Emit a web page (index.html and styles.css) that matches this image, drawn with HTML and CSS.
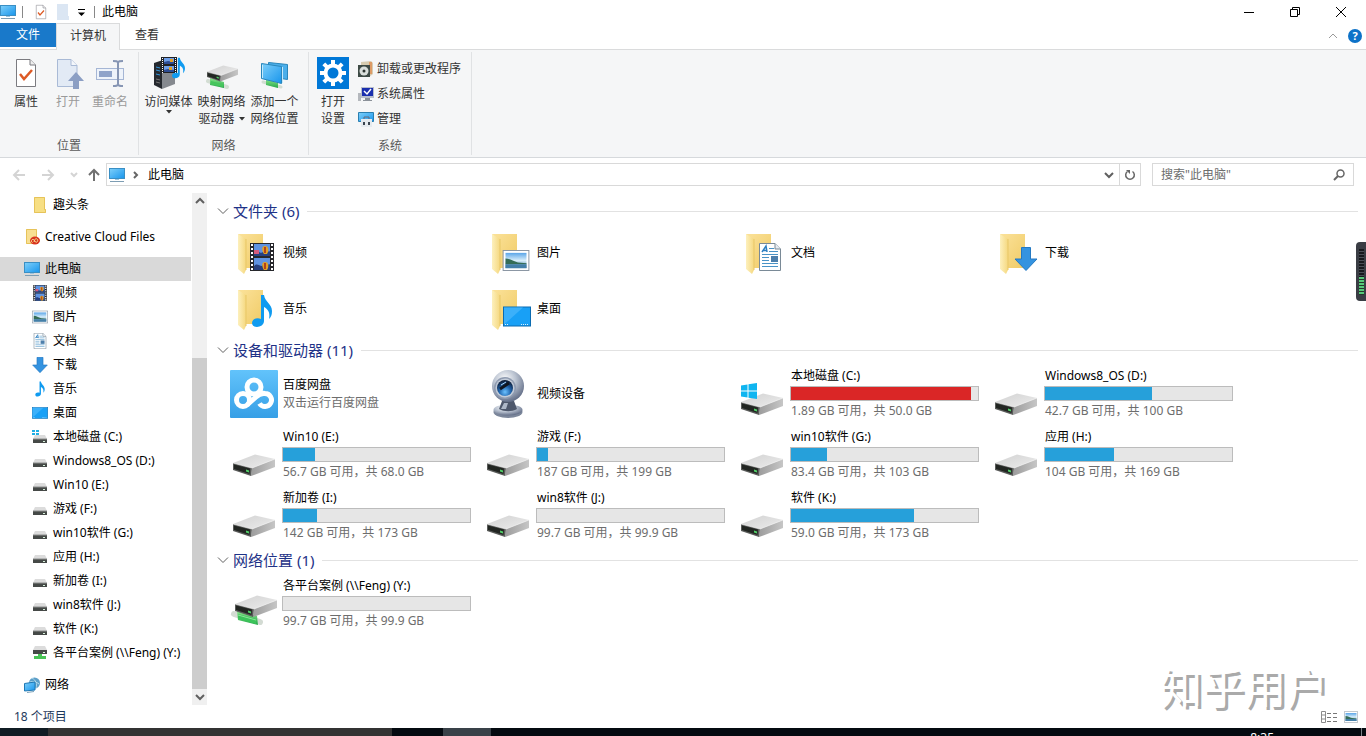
FILE: index.html
```
<!DOCTYPE html>
<html lang="zh-CN">
<head>
	<meta charset="utf-8">
	<title>此电脑</title>
	<link rel="stylesheet" href="styles.css">
</head>
<body>
	<svg class="sprite" aria-hidden="true">
		<defs>
			<linearGradient id="g-screen" x1="0" y1="0" x2="1" y2="1">
				<stop offset="0" stop-color="#7fd0fa"/><stop offset="1" stop-color="#1795ec"/>
			</linearGradient>
			<linearGradient id="g-folder" x1="0" y1="0" x2="1" y2="1">
				<stop offset="0" stop-color="#fbe29a"/><stop offset="1" stop-color="#f0cb66"/>
			</linearGradient>
			<linearGradient id="g-flap" x1="0" y1="0" x2="1" y2="0">
				<stop offset="0" stop-color="#fdf0bd"/><stop offset="1" stop-color="#f5d87f"/>
			</linearGradient>
			<linearGradient id="g-top" x1="0" y1="0" x2="1" y2="1">
				<stop offset="0" stop-color="#d2d2d2"/><stop offset="1" stop-color="#ececec"/>
			</linearGradient>
			<linearGradient id="g-side" x1="0" y1="0" x2="1" y2="0">
				<stop offset="0" stop-color="#9c9c9c"/><stop offset="1" stop-color="#c6c6c6"/>
			</linearGradient>
			<linearGradient id="g-pipe" x1="0" y1="0" x2="0" y2="1">
				<stop offset="0" stop-color="#8be58b"/><stop offset="1" stop-color="#25a84a"/>
			</linearGradient>
			<linearGradient id="g-baidu" x1="0" y1="0" x2="0" y2="1">
				<stop offset="0" stop-color="#62c3fb"/><stop offset="1" stop-color="#369fe6"/>
			</linearGradient>
			<linearGradient id="g-photo" x1="0" y1="0" x2="0" y2="1">
				<stop offset="0" stop-color="#5aa5e8"/><stop offset="0.5" stop-color="#d8eefa"/><stop offset="1" stop-color="#3d7da5"/>
			</linearGradient>
			<radialGradient id="g-cam" cx="0.4" cy="0.3" r="0.7">
				<stop offset="0" stop-color="#ffffff"/><stop offset="0.5" stop-color="#b9c2d0"/><stop offset="1" stop-color="#66718a"/>
			</radialGradient>
			<radialGradient id="g-lens" cx="0.5" cy="0.75" r="0.7">
				<stop offset="0" stop-color="#6cc2ff"/><stop offset="0.5" stop-color="#2267b0"/><stop offset="1" stop-color="#0c1c38"/>
			</radialGradient>
		</defs>

		<symbol id="pc" viewBox="0 0 16 16">
			<rect x="0.5" y="1.5" width="15" height="10" fill="url(#g-screen)" stroke="#3a8fc4"/>
			<path d="M6 12h4v1H6z" fill="#9cc3dd"/><path d="M1 14h14v1H1z" fill="#7d9db3"/>
		</symbol>
		<symbol id="check-doc" viewBox="0 0 24 32">
			<path d="M2.500 2.500H16l5.500 5.500V29.500H2.500z" fill="#fff" stroke="#7b7b80"/>
			<path d="M16 2.500V8h5.500" fill="#eee" stroke="#7b7b80"/>
			<path d="M6 17l4 5 8-9" fill="none" stroke="#dd5a25" stroke-width="2.500"/>
		</symbol>
		<symbol id="open-doc" viewBox="0 0 32 32">
			<path d="M5.500 2.500H19l6 6V29.500H5.500z" fill="#e2eaf5" stroke="#a9bad6"/>
			<path d="M19 2.500V8.500h6" fill="#f4f7fb" stroke="#a9bad6"/>
			<path d="M24 15l8 9h-5v8h-6v-8h-5z" fill="#8c9fc4"/>
		</symbol>
		<symbol id="rename" viewBox="0 0 32 32">
			<rect x="2.500" y="11.500" width="27" height="11" fill="#eef3fa" stroke="#a5b6d5"/>
			<path d="M5 14h13v6H5z" fill="#8fa3c9"/>
			<path d="M19 4c3 0 5 0 5 2v21c0 2-2 2-5 2M29 4c-3 0-5 0-5 2M29 29c-3 0-5 0-5-2" fill="none" stroke="#8796b4" stroke-width="2"/>
		</symbol>
		<symbol id="film" viewBox="0 0 24 28">
			<path d="M0 0h24v28H0z" fill="#27282c"/>
			<path d="M4 1h16v12H4zM4 15h16v12H4z" fill="#5f93e2"/>
			<path d="M4 10c4-5 6 2 9-1s5 1 7-1v5H4zM4 23c4-4 6 2 9-1s5 1 7-1v6H4z" fill="#27407f"/>
			<path d="M15 3c4 0 4 5 2 8h-3c-2-3-3-8 1-8zM15 19c4 0 4 5 2 8h-3c-2-3-3-8 1-8z" fill="#e2a126"/>
			<path d="M15 4v6M15 20v6" stroke="#a3251b" stroke-width="1.500"/>
			<path d="M4 7h5v4H4z" fill="#d65b7b"/>
			<path d="M2 1v27M22 1v27" stroke="#fff" stroke-width="2" stroke-dasharray="2 2"/>
		</symbol>
		<symbol id="picture" viewBox="0 0 28 22">
			<rect x="0.5" y="0.5" width="27" height="21" fill="#fff" stroke="#8793a0"/>
			<path d="M3 3h22v16H3z" fill="url(#g-photo)"/>
			<path d="M3 9c5 0 8 3 13 4l9 1v1H3z" fill="#356d57"/><path d="M3 15h22v4H3z" fill="#447fa8"/>
		</symbol>
		<symbol id="text-doc" viewBox="0 0 22 28">
			<path d="M.5.5H16l5.500 5.500v21.500H.5z" fill="#fff" stroke="#7a8a97"/>
			<path d="M16 .5V6h5.500" fill="#e8edf2" stroke="#7a8a97"/>
			<path d="M3 9l4-6 1 6M4 7.500h4" fill="none" stroke="#2d7fc1" stroke-width="1.500"/>
			<path d="M10 5.500h5M10 8.500h9M3 11.500h16M3 14.500h7M3 17.500h7M3 20.500h16M3 23.500h16" stroke="#4a93c6"/>
			<path d="M12 13h7v6h-7z" fill="#4d7fab"/>
		</symbol>
		<symbol id="down" viewBox="0 0 24 24">
			<path d="M7.500.5h9V12H23L12 23.500 1 12h6.500z" fill="#3493e0" stroke="#2479c2"/>
		</symbol>
		<symbol id="note" viewBox="0 0 22 34">
			<path d="M10 1h3c1 7 8 9 8 16 0 4-1 6-3 8 1-6 0-9-5-12v14c0 7-12 8-12 2 0-4 5-6 9-4z" fill="#109bf0"/>
		</symbol>
		<symbol id="desktop" viewBox="0 0 28 20">
			<rect x=".5" y=".5" width="27" height="19" fill="#18a0f6" stroke="#0b6bb0"/>
			<path d="M1 18L20 1H1z" fill="#3bb0fa"/>
			<path d="M2 18h4M18 18h8" stroke="#d9f1ff" stroke-dasharray="1 1"/>
		</symbol>
		<symbol id="folder" viewBox="0 0 48 48">
			<path d="M8 5h25v34H14z" fill="url(#g-folder)"/>
			<path d="M8 5l8 5v31l-2 4-6-5z" fill="url(#g-flap)"/>
			<path d="M16 10v31" stroke="#e8c766"/>
		</symbol>
		<symbol id="folder-small" viewBox="0 0 16 16">
			<path d="M2 0h11v12h1v4H2z" fill="#f7df84"/><path d="M2.500.5h10v12h1v3h-11z" fill="none" stroke="#e6c35a"/>
		</symbol>
		<symbol id="cloud-folder" viewBox="0 0 16 16">
			<path d="M2 0h11v15H2z" fill="#f8df92"/><path d="M2.500.5h10v14h-10z" fill="none" stroke="#e6c35a"/>
			<ellipse cx="11" cy="11.500" rx="5" ry="4" fill="#d9331e"/>
			<path d="M8.500 13.500a1.500 1.500 0 1 1 1-3l2 2.500c2 1 3-2 1.500-3s-2 0-3 3" fill="none" stroke="#f8df92"/>
		</symbol>
		<symbol id="box" viewBox="0 0 42 24">
			<path d="M0 9L22 .5 42 5 19 14z" fill="url(#g-top)"/>
			<path d="M19 14L42 5v8L18 22z" fill="url(#g-side)"/>
			<path d="M0 9l19 5-1 8L0 16z" fill="#5a5c5a"/>
			<path d="M1 10.500l16 4-.5 5.500L1 15z" fill="#222622"/>
			<path d="M13 15.500l3 1v2l-3-1z" fill="#51d068"/>
			<path d="M0 9l19 5L42 5" fill="none" stroke="#f5f5f5" stroke-width=".6"/>
		</symbol>
		<symbol id="drive" viewBox="0 0 48 48">
			<use href="#box" x="3" y="23" width="42" height="24"/>
		</symbol>
		<symbol id="win-logo" viewBox="0 0 16 16">
			<path d="M0 2.500L6.500 1.500v6H0zM7.500 1.300L16 0v7.500H7.500zM0 8.500h6.500v6L0 13.500zM7.500 8.500H16V16L7.500 14.700z" fill="#0fb5f0"/>
		</symbol>
		<symbol id="drive-win" viewBox="0 0 48 48">
			<use href="#box" x="3" y="23" width="42" height="24"/>
			<use href="#win-logo" x="3" y="13" width="16" height="16"/>
		</symbol>
		<symbol id="drive-net" viewBox="0 0 48 48">
			<path d="M4 34l26 8" stroke="#d3dbd3" stroke-width="6" stroke-linecap="round"/>
			<path d="M7 31l20 5 1 9-20-5z" fill="url(#g-pipe)"/>
			<use href="#box" x="5" y="15" width="42" height="24"/>
			<path d="M8 34l18 5v5L8 39z" fill="#3cc35a"/><path d="M8 35l18 5" stroke="#8ee59a"/>
		</symbol>
		<symbol id="drive-small" viewBox="0 0 16 16">
			<path d="M3 6h10l2 4H1z" fill="#dcdcdc"/><path d="M1 10h14v4H1z" fill="#454947"/>
			<path d="M1 10h14" stroke="#8d8f8e"/><path d="M11 12h2v1h-2z" fill="#d8f2dc"/>
		</symbol>
		<symbol id="drive-small-win" viewBox="0 0 16 16">
			<use href="#drive-small" width="16" height="16"/>
			<path d="M0 1h3v2H0zM4 1h3v2H4zM0 4h3v2H0zM4 4h3v2H4z" fill="#20aee4"/>
		</symbol>
		<symbol id="drive-small-net" viewBox="0 0 16 16">
			<path d="M3 1h10l2 4H1z" fill="#dcdcdc"/><path d="M1 5h14v4H1z" fill="#454947"/>
			<path d="M11 7h2v1h-2z" fill="#d8f2dc"/>
			<path d="M6 9h4v2h4v3H2v-3h4z" fill="#48c455"/>
		</symbol>
		<symbol id="network" viewBox="0 0 16 16">
			<circle cx="10.500" cy="6" r="5.500" fill="#5c9fc8"/><path d="M8 1c4 2 5 6 4 10M6 5c3-1 7 0 9 2" stroke="#b5dced" fill="none"/>
			<path d="M.5 6.500L11 5v8L.5 14z" fill="url(#g-screen)" stroke="#1f78b4"/><path d="M3 15.500l7-1" stroke="#7ba1b8"/>
		</symbol>
		<symbol id="server" viewBox="0 0 32 32">
			<path d="M1 6l9-3v26H7l-6-3z" fill="#22262b"/><path d="M9 6l13-1v22l-13 5z" fill="#85898f"/>
			<path d="M1 6l8 1v25l-8-4z" fill="#25292f"/>
			<path d="M3 10l4 1M3 13l4 1M3 17l4 1" stroke="#3298e0"/>
			<path d="M3 22l4 1M3 25l4 1" stroke="#777"/>
			<use href="#film-wide" x="8" y="0" width="16" height="16"/>
			<use href="#note" x="18" y="0" width="15" height="22"/>
		</symbol>
		<symbol id="film-wide" viewBox="0 0 16 16">
			<path d="M0 0h16v16H0z" fill="#202226"/>
			<path d="M3 1h10v6H3zM3 9h10v6H3z" fill="#6f9fe8"/>
			<path d="M3 5l4-1 6 1v2H3zM3 13l4-1 6 1v2H3z" fill="#2d4c93"/>
			<path d="M9 2h3v3H9zM8 10h3v3H8z" fill="#e2a126"/>
			<path d="M1.500 1v15M14.500 1v15" stroke="#fff" stroke-dasharray="1 1"/>
		</symbol>
		<symbol id="net-drive" viewBox="0 0 32 32">
			<path d="M2 24l19 6" stroke="#d3ddd3" stroke-width="4" stroke-linecap="round"/>
			<path d="M4 21l14 4v6L4 28z" fill="url(#g-pipe)"/>
			<use href="#box" x="1" y="8" width="31" height="18"/>
			<path d="M5 24l12 3v3L5 27z" fill="#46c65c"/>
		</symbol>
		<symbol id="net-place" viewBox="0 0 32 32">
			<path d="M4 25l18 5" stroke="#d3ddd3" stroke-width="3" stroke-linecap="round"/>
			<path d="M7 22l12 4v5L7 28z" fill="url(#g-pipe)"/>
			<path d="M9.500 5.500l19 2v15l-19-3z" fill="#4aaeea" stroke="#2986bb"/>
			<path d="M2.500 6.500l20 3v17l-20-5z" fill="url(#g-screen)" stroke="#2986bb"/>
			<path d="M3.500 8v13M23.500 10v16" stroke="#c5e9fb"/>
		</symbol>
		<symbol id="gear" viewBox="0 0 32 32">
			<path d="M0 0h32v32H0z" fill="#0078d7"/>
			<circle cx="16" cy="16" r="7.500" fill="none" stroke="#fff" stroke-width="4"/>
			<g stroke="#fff" stroke-width="4">
				<path d="M16 3v5M16 24v5M3 16h5M24 16h5"/>
				<path d="M6.800 6.800l3.600 3.600M21.600 21.600l3.600 3.600M6.800 25.200l3.600-3.600M21.600 10.400l3.600-3.600"/>
			</g>
		</symbol>
		<symbol id="uninstall" viewBox="0 0 16 16">
			<path d="M3 1l10-1 2 2v11l-4 3-8-2z" fill="#d6cbb0"/><path d="M11 1h3v12h-3z" fill="#dd9b66"/>
			<path d="M0 4h12v12H0z" fill="#3d4a45"/><circle cx="6" cy="10" r="4.500" fill="#d9dedb"/><circle cx="6" cy="10" r="1.500" fill="#2b3330"/>
		</symbol>
		<symbol id="sys-props" viewBox="0 0 16 16">
			<path d="M0 7h3v8H0z" fill="#b4b8bd"/><path d="M3 1h13v11H3z" fill="#b9bfcc"/><path d="M4 2h11v8H4z" fill="#1b2fae"/>
			<path d="M6 5l3 3 4-5" fill="none" stroke="#fff" stroke-width="1.500"/><path d="M7 12h5v2h2v1H5v-1h2z" fill="#8b9199"/>
		</symbol>
		<symbol id="manage" viewBox="0 0 16 16">
			<path d="M.5 1.500h15v9H.5z" fill="url(#g-screen)" stroke="#2a7fb0"/>
			<path d="M3 8h11v8H3z" fill="#e6ebef"/><path d="M6 8V6h5v2" fill="none" stroke="#667"/><path d="M5 11h2v3H5zM10 11h2v3h-2z" fill="#3b4650"/>
		</symbol>
		<symbol id="baidu" viewBox="0 0 48 48">
			<rect width="48" height="48" rx="1" fill="url(#g-baidu)"/>
			<g fill="none" stroke="#fff" stroke-width="5">
				<circle cx="24" cy="17" r="7"/><circle cx="13" cy="30" r="6.500"/>
				<path d="M17 35l9-8c3-3 6-4 9-3.500a6.500 6.500 0 1 1-5.500 10"/>
			</g>
		</symbol>
		<symbol id="webcam" viewBox="0 0 48 48">
			<ellipse cx="24" cy="42" rx="14.500" ry="6" fill="#7c879b"/><ellipse cx="24" cy="40" rx="14.500" ry="5.500" fill="url(#g-cam)"/>
			<path d="M18 31h12l3 8c-5 3-13 3-18 0z" fill="#4e586c"/><path d="M20 33l-3 6h5l2-6z" fill="#aeb8c8"/>
			<circle cx="24" cy="16" r="16" fill="url(#g-cam)"/>
			<circle cx="21" cy="18" r="11" fill="#8f9bb0"/><circle cx="21" cy="18" r="9.500" fill="#c3ccd9"/>
			<circle cx="21" cy="18" r="8" fill="url(#g-lens)"/>
			<path d="M16 19l9-6" stroke="#10151f" stroke-width="3"/><path d="M17 15l5-3" stroke="#a9d6fa"/>
		</symbol>
		<symbol id="chev-down" viewBox="0 0 12 12"><path d="M1 3.500l5 5 5-5" fill="none" stroke="currentColor"/></symbol>
		<symbol id="chev-bold" viewBox="0 0 12 12"><path d="M2 4l4 4 4-4" fill="none" stroke="currentColor" stroke-width="2"/></symbol>
		<symbol id="tri" viewBox="0 0 6 4"><path d="M0 0h6L3 3.500z" fill="currentColor"/></symbol>
	</svg>

	<div class="window">
		<header class="title-bar">
			<svg class="icon-16"><use href="#pc"/></svg>
			<span class="title-sep"></span>
			<button class="quick" aria-label="属性"><svg class="icon-16"><use href="#check-doc"/></svg></button>
			<button class="quick" aria-label="新建文件夹"><svg class="icon-16" viewBox="0 0 16 16"><path d="M2 0h11v12h1v4H2z" fill="#dbe6f3"/></svg></button>
			<button class="quick quick-more" aria-label="自定义快速访问工具栏"><svg width="7" height="8" viewBox="0 0 7 8"><path d="M0 0h7v1H0zM0 3.500h7L3.500 7z"/></svg></button>
			<span class="title-sep"></span>
			<span class="title-text">此电脑</span>
			<div class="window-controls">
				<button aria-label="最小化"><svg width="12" height="12"><path d="M1 6.500h10" stroke="#000"/></svg></button>
				<button aria-label="还原"><svg width="12" height="12"><path d="M1.500 3.500h7v7h-7zM3.500 3.500v-2h7v7h-2" fill="none" stroke="#000"/></svg></button>
				<button aria-label="关闭"><svg width="12" height="12"><path d="M1 1l10 10M11 1L1 11" stroke="#000"/></svg></button>
			</div>
		</header>

		<nav class="tabs">
			<button class="tab tab-file">文件</button>
			<button class="tab tab-active">计算机</button>
			<button class="tab">查看</button>
			<div class="tabs-right">
				<button aria-label="最小化功能区"><svg width="10" height="6"><path d="M1 5l4-4 4 4" fill="none" stroke="#9a9a9a"/></svg></button>
				<button class="help" aria-label="帮助">?</button>
			</div>
		</nav>

		<section class="ribbon">
			<div class="ribbon-group">
				<div class="ribbon-buttons group-location">
					<button class="big-button"><svg class="icon-32"><use href="#check-doc"/></svg>属性</button>
					<button class="big-button" disabled><svg class="icon-32"><use href="#open-doc"/></svg>打开</button>
					<button class="big-button" disabled><svg class="icon-32"><use href="#rename"/></svg>重命名</button>
				</div>
				<div class="ribbon-label">位置</div>
			</div>
			<div class="ribbon-group">
				<div class="ribbon-buttons group-network">
					<button class="big-button"><svg class="icon-32"><use href="#server"/></svg>访问媒体<svg class="arrow"><use href="#tri"/></svg></button>
					<button class="big-button"><svg class="icon-32"><use href="#net-drive"/></svg>映射网络<span>驱动器 <svg class="arrow"><use href="#tri"/></svg></span></button>
					<button class="big-button"><svg class="icon-32"><use href="#net-place"/></svg>添加一个<span>网络位置</span></button>
				</div>
				<div class="ribbon-label">网络</div>
			</div>
			<div class="ribbon-group">
				<div class="ribbon-buttons group-system">
					<button class="big-button"><svg class="icon-32"><use href="#gear"/></svg>打开<span>设置</span></button>
					<div class="small-buttons">
						<button><svg class="icon-16"><use href="#uninstall"/></svg>卸载或更改程序</button>
						<button><svg class="icon-16"><use href="#sys-props"/></svg>系统属性</button>
						<button><svg class="icon-16"><use href="#manage"/></svg>管理</button>
					</div>
				</div>
				<div class="ribbon-label">系统</div>
			</div>
		</section>

		<div class="address-row">
			<div class="nav-buttons">
				<button aria-label="后退" disabled><svg width="14" height="12"><path d="M13 6H2M7 1L2 6l5 5" fill="none" stroke="#d4d4d4" stroke-width="2"/></svg></button>
				<button aria-label="前进" disabled><svg width="14" height="12"><path d="M1 6h11M7 1l5 5-5 5" fill="none" stroke="#d4d4d4" stroke-width="2"/></svg></button>
				<button class="nav-recent" aria-label="最近" disabled><svg width="8" height="6"><path d="M1 1l3 3 3-3" fill="none" stroke="#d4d4d4" stroke-width="2"/></svg></button>
				<button aria-label="上移"><svg width="14" height="14"><path d="M7 13V2M2 7l5-5 5 5" fill="none" stroke="#707070" stroke-width="2"/></svg></button>
			</div>
			<div class="address">
				<svg class="icon-16"><use href="#pc"/></svg>
				<svg width="6" height="8"><path d="M1 1l3 3-3 3" fill="none" stroke="#666" stroke-width="2"/></svg>
				<a href="#">此电脑</a>
				<button class="address-drop" aria-label="历史记录"><svg class="chev"><use href="#chev-bold"/></svg></button>
				<button class="address-refresh" aria-label="刷新"><svg width="12" height="12" viewBox="0 0 12 12"><path d="M8.500 2.500a4.300 4.300 0 1 1-5 0" fill="none" stroke="#666" stroke-width="1.500"/><path d="M2 1h4v4z" fill="#666"/></svg></button>
			</div>
			<form class="search">
				<input type="text" aria-label="搜索" placeholder="搜索&quot;此电脑&quot;">
				<button aria-label="搜索"><svg width="12" height="12"><circle cx="7.500" cy="4.500" r="3.500" fill="none" stroke="#666" stroke-width="1.500"/><path d="M5 7L1 11" stroke="#666" stroke-width="2"/></svg></button>
			</form>
		</div>

		<div class="main">
			<aside class="sidebar">
				<nav class="tree">
					<a class="child" href="#"><svg class="icon-16"><use href="#folder-small"/></svg>趣头条</a>
					<a class="root" href="#"><svg class="icon-16"><use href="#cloud-folder"/></svg>Creative Cloud Files</a>
					<a class="root selected" href="#"><svg class="icon-16"><use href="#pc"/></svg>此电脑</a>
					<a class="child" href="#"><svg class="icon-16"><use href="#film"/></svg>视频</a>
					<a class="child" href="#"><svg class="icon-16"><use href="#picture"/></svg>图片</a>
					<a class="child" href="#"><svg class="icon-16"><use href="#text-doc"/></svg>文档</a>
					<a class="child" href="#"><svg class="icon-16"><use href="#down"/></svg>下载</a>
					<a class="child" href="#"><svg class="icon-16"><use href="#note"/></svg>音乐</a>
					<a class="child" href="#"><svg class="icon-16"><use href="#desktop"/></svg>桌面</a>
					<a class="child" href="#"><svg class="icon-16"><use href="#drive-small-win"/></svg>本地磁盘 (C:)</a>
					<a class="child" href="#"><svg class="icon-16"><use href="#drive-small"/></svg>Windows8_OS (D:)</a>
					<a class="child" href="#"><svg class="icon-16"><use href="#drive-small"/></svg>Win10 (E:)</a>
					<a class="child" href="#"><svg class="icon-16"><use href="#drive-small"/></svg>游戏 (F:)</a>
					<a class="child" href="#"><svg class="icon-16"><use href="#drive-small"/></svg>win10软件 (G:)</a>
					<a class="child" href="#"><svg class="icon-16"><use href="#drive-small"/></svg>应用 (H:)</a>
					<a class="child" href="#"><svg class="icon-16"><use href="#drive-small"/></svg>新加卷 (I:)</a>
					<a class="child" href="#"><svg class="icon-16"><use href="#drive-small"/></svg>win8软件 (J:)</a>
					<a class="child" href="#"><svg class="icon-16"><use href="#drive-small"/></svg>软件 (K:)</a>
					<a class="child" href="#"><svg class="icon-16"><use href="#drive-small-net"/></svg>各平台案例 (\\Feng) (Y:)</a>
					<a class="root" href="#"><svg class="icon-16"><use href="#network"/></svg>网络</a>
				</nav>
				<div class="scrollbar">
					<button aria-label="向上滚动"><svg class="chev chev-up"><use href="#chev-bold"/></svg></button>
					<div class="scroll-track"><div class="scroll-thumb"></div></div>
					<button aria-label="向下滚动"><svg class="chev"><use href="#chev-bold"/></svg></button>
				</div>
			</aside>

			<main class="content">
				<section class="group">
					<h2><svg class="chev"><use href="#chev-down"/></svg>文件夹 (6)</h2>
					<div class="items folders">
						<a class="item" href="#"><svg class="icon-48"><use href="#folder"/><use href="#film" x="20" y="14" width="24" height="28"/></svg><span class="name">视频</span></a>
						<a class="item" href="#"><svg class="icon-48"><use href="#folder"/><use href="#picture" x="18" y="21" width="28" height="21"/></svg><span class="name">图片</span></a>
						<a class="item" href="#"><svg class="icon-48"><use href="#folder"/><use href="#text-doc" x="21" y="14" width="22" height="28"/></svg><span class="name">文档</span></a>
						<a class="item" href="#"><svg class="icon-48"><use href="#folder"/><use href="#down" x="22" y="18" width="24" height="24"/></svg><span class="name">下载</span></a>
						<a class="item" href="#"><svg class="icon-48"><use href="#folder"/><use href="#note" x="21" y="9" width="22" height="34"/></svg><span class="name">音乐</span></a>
						<a class="item" href="#"><svg class="icon-48"><use href="#folder"/><use href="#desktop" x="19" y="21" width="28" height="21"/></svg><span class="name">桌面</span></a>
					</div>
				</section>

				<section class="group">
					<h2><svg class="chev"><use href="#chev-down"/></svg>设备和驱动器 (11)</h2>
					<div class="items">
						<a class="item" href="#"><svg class="icon-48"><use href="#baidu"/></svg><span class="info"><span class="name">百度网盘</span><span class="detail">双击运行百度网盘</span></span></a>
						<a class="item" href="#"><svg class="icon-48"><use href="#webcam"/></svg><span class="name">视频设备</span></a>
						<a class="item" href="#"><svg class="icon-48"><use href="#drive-win"/></svg><span class="info"><span class="name">本地磁盘 (C:)</span><span class="bar"><span class="fill full" style="width: 96%"></span></span><span class="detail">1.89 GB 可用，共 50.0 GB</span></span></a>
						<a class="item" href="#"><svg class="icon-48"><use href="#drive"/></svg><span class="info"><span class="name">Windows8_OS (D:)</span><span class="bar"><span class="fill" style="width: 57%"></span></span><span class="detail">42.7 GB 可用，共 100 GB</span></span></a>
						<a class="item" href="#"><svg class="icon-48"><use href="#drive"/></svg><span class="info"><span class="name">Win10 (E:)</span><span class="bar"><span class="fill" style="width: 17%"></span></span><span class="detail">56.7 GB 可用，共 68.0 GB</span></span></a>
						<a class="item" href="#"><svg class="icon-48"><use href="#drive"/></svg><span class="info"><span class="name">游戏 (F:)</span><span class="bar"><span class="fill" style="width: 6%"></span></span><span class="detail">187 GB 可用，共 199 GB</span></span></a>
						<a class="item" href="#"><svg class="icon-48"><use href="#drive"/></svg><span class="info"><span class="name">win10软件 (G:)</span><span class="bar"><span class="fill" style="width: 19%"></span></span><span class="detail">83.4 GB 可用，共 103 GB</span></span></a>
						<a class="item" href="#"><svg class="icon-48"><use href="#drive"/></svg><span class="info"><span class="name">应用 (H:)</span><span class="bar"><span class="fill" style="width: 37%"></span></span><span class="detail">104 GB 可用，共 169 GB</span></span></a>
						<a class="item" href="#"><svg class="icon-48"><use href="#drive"/></svg><span class="info"><span class="name">新加卷 (I:)</span><span class="bar"><span class="fill" style="width: 18%"></span></span><span class="detail">142 GB 可用，共 173 GB</span></span></a>
						<a class="item" href="#"><svg class="icon-48"><use href="#drive"/></svg><span class="info"><span class="name">win8软件 (J:)</span><span class="bar"></span><span class="detail">99.7 GB 可用，共 99.9 GB</span></span></a>
						<a class="item" href="#"><svg class="icon-48"><use href="#drive"/></svg><span class="info"><span class="name">软件 (K:)</span><span class="bar"><span class="fill" style="width: 66%"></span></span><span class="detail">59.0 GB 可用，共 173 GB</span></span></a>
					</div>
				</section>

				<section class="group">
					<h2><svg class="chev"><use href="#chev-down"/></svg>网络位置 (1)</h2>
					<div class="items">
						<a class="item" href="#"><svg class="icon-48"><use href="#drive-net"/></svg><span class="info"><span class="name">各平台案例 (\\Feng) (Y:)</span><span class="bar"></span><span class="detail">99.7 GB 可用，共 99.9 GB</span></span></a>
					</div>
				</section>
			</main>
		</div>

		<footer class="status-bar">
			<span>18 个项目</span>
			<div class="view-buttons">
				<button aria-label="详细信息"><svg width="16" height="12"><path d="M.5.5h4v11h-4zM.5 4h4M.5 8h4" fill="none" stroke="#8b8b8b"/><path d="M6 2.500h10M6 6.500h10M6 10.500h10" stroke="#777" stroke-dasharray="4 2"/></svg></button>
				<button aria-label="大图标"><svg width="14" height="12"><use href="#picture"/></svg></button>
			</div>
		</footer>

		<div class="taskbar">
			<span class="task-start"></span>
			<span class="task-search"></span>
			<span class="task-app"></span>
			<span class="clock">8:35</span>
			<span class="show-desktop"></span>
		</div>
	</div>

	<div class="watermark">知乎用户</div>
	<div class="side-meter"><span class="meter-idle"></span><span class="meter-live"></span></div>
</body>
</html>
```
FILE: styles.css
```
* {
	box-sizing: border-box;
}
body {
	margin: 0;
	background-color: #fff;
	color: #000;
	font-family: "Noto Sans", "Noto Sans CJK SC", sans-serif;
	font-size: 12px;
	line-height: 18px;
}
button, input {
	font: inherit;
	color: inherit;
	padding: 0;
	border: none;
	background: none;
}
a {
	color: inherit;
	text-decoration: none;
}
svg {
	display: block;
	flex: none;
}
.sprite {
	position: absolute;
	width: 0;
	height: 0;
}
.icon-16 {
	width: 16px;
	height: 16px;
}
.icon-32 {
	width: 32px;
	height: 32px;
}
.icon-48 {
	width: 48px;
	height: 48px;
}
.chev {
	width: 12px;
	height: 12px;
	color: #606060;
}
.chev-up {
	transform: rotate(180deg);
}
.window {
	display: flex;
	flex-direction: column;
	height: 100vh;
	overflow: hidden;
}

/* title bar */
.title-bar {
	display: flex;
	align-items: center;
	flex: none;
	height: 23px;
}
.title-sep {
	width: 1px;
	height: 12px;
	margin: 0 7px 0 6px;
	background-color: #888;
}
.quick {
	padding: 0 3px;
}
.quick-more {
	padding: 2px 3px 0;
	margin-left: 1px;
}
.window-controls {
	display: flex;
	margin-left: auto;
	padding-right: 2px;
}
.window-controls button {
	display: flex;
	align-items: center;
	justify-content: center;
	width: 46px;
	height: 20px;
}

/* tabs */
.tabs {
	display: flex;
	flex: none;
	height: 27px;
	border-bottom: 1px solid #dadbdc;
}
.tab {
	width: 54px;
	height: 24px;
	color: #333;
}
.tab-file {
	width: 56px;
	background-color: #1979ca;
	color: #fff;
}
.tab-active {
	width: 64px;
	height: 27px;
	padding-bottom: 2px;
	border: 1px solid #dadbdc;
	border-bottom: none;
	background-color: #f5f6f7;
}
.tabs-right {
	display: flex;
	align-items: center;
	gap: 10px;
	margin-left: auto;
	padding-right: 4px;
}
.help {
	width: 14px;
	height: 14px;
	border-radius: 7px;
	background-color: #0d72c8;
	color: #fff;
	font-size: 11px;
	font-weight: bold;
	line-height: 14px;
}

/* ribbon */
.ribbon {
	display: flex;
	flex: none;
	height: 108px;
	padding: 2px 0;
	border-bottom: 1px solid #d6d9dc;
	background-color: #f5f6f7;
	color: #333;
}
.ribbon-group {
	display: flex;
	flex-direction: column;
	justify-content: space-between;
	border-right: 1px solid #e0e2e4;
}
.ribbon-buttons {
	display: flex;
	padding-top: 5px;
}
.group-location {
	padding-left: 5px;
	padding-right: 7px;
}
.group-network {
	padding-left: 3px;
	padding-right: 7px;
}
.group-system {
	gap: 4px;
	padding-left: 3px;
	padding-right: 10px;
}
.big-button {
	display: flex;
	flex-direction: column;
	align-items: center;
	width: 42px;
	line-height: 17px;
	white-space: nowrap;
}
.big-button:disabled {
	color: #9a9a9a;
}
.big-button .icon-32 {
	margin-bottom: 4px;
}
.group-network .big-button {
	width: 53px;
}
.big-button span {
	display: flex;
	align-items: center;
	gap: 4px;
}
.arrow {
	width: 6px;
	height: 4px;
}
.small-buttons {
	display: flex;
	flex-direction: column;
	gap: 7px;
	padding-top: 3px;
}
.small-buttons button {
	display: flex;
	align-items: center;
	gap: 3px;
}
.ribbon-label {
	color: #5a5a5a;
	text-align: center;
}

/* address row */
.address-row {
	display: flex;
	flex: none;
	height: 35px;
	padding: 5px 12px 7px;
}
.nav-buttons {
	display: flex;
	align-items: center;
	gap: 15px;
	width: 94px;
}
.nav-recent {
	margin-right: -6px;
}
.address {
	display: flex;
	align-items: center;
	flex: 1;
	border: 1px solid #d9d9d9;
	padding-left: 2px;
}
.address a {
	flex: 1;
	padding-left: 9px;
}
.address .icon-16 {
	margin-right: 8px;
}
.address button {
	display: flex;
	align-items: center;
	justify-content: center;
	width: 20px;
	height: 100%;
}
.address .address-refresh {
	width: 21px;
	border-left: 1px solid #d9d9d9;
}
.search {
	display: flex;
	align-items: center;
	width: 202px;
	margin-left: 11px;
	padding: 0 8px;
	border: 1px solid #d9d9d9;
}
.search input {
	flex: 1;
	min-width: 0;
}
.search input::placeholder {
	color: #6d6d6d;
}

/* folder tree */
.main {
	display: flex;
	flex: 1;
	min-height: 0;
}
.sidebar {
	display: flex;
	flex: none;
	width: 207px;
}
.tree {
	flex: 1;
	overflow: hidden;
	padding-right: 1px;
}
.tree a {
	display: flex;
	align-items: center;
	gap: 5px;
	height: 24px;
	white-space: nowrap;
}
.tree .child {
	padding-left: 32px;
}
.tree .root {
	margin-top: 8px;
	padding-left: 24px;
}
.tree .selected {
	background-color: #d9d9d9;
}
.scrollbar {
	display: flex;
	flex-direction: column;
	width: 15px;
	background-color: #f0f0f0;
}
.scrollbar button {
	display: flex;
	align-items: center;
	justify-content: center;
	height: 16px;
}
.scroll-track {
	display: flex;
	flex-direction: column;
	justify-content: flex-end;
	flex: 1;
}
.scroll-thumb {
	height: 69%;
	background-color: #cdcdcd;
}

/* content */
.content {
	flex: 1;
	min-width: 0;
	padding: 6px 8px 0 10px;
}
.group {
	margin-bottom: 1px;
}
.group h2 {
	display: flex;
	align-items: center;
	gap: 4px;
	height: 24px;
	margin: 0;
	color: #1e3287;
	font-size: 15px;
	font-weight: normal;
	white-space: nowrap;
}
.group h2::after {
	content: "";
	flex: 1;
	height: 1px;
	margin-left: 4px;
	background-color: #e2e2e2;
}
.items {
	display: grid;
	grid-template-columns: repeat(auto-fill, 254px);
	grid-auto-rows: 61px;
	padding: 1px 0 1px 13px;
}
.folders {
	grid-auto-rows: 56px;
	padding-top: 2px;
	padding-bottom: 0;
}
.item {
	display: flex;
	align-items: center;
	gap: 4px;
}
.info {
	width: 189px;
}
.name, .detail {
	display: block;
	padding-left: 1px;
	white-space: nowrap;
}
.detail {
	color: #6d6d6d;
}
.bar {
	display: block;
	height: 15px;
	margin: 1px 0;
	border: 1px solid #bcbcbc;
	background-color: #e6e6e6;
}
.fill {
	display: block;
	height: 100%;
	background-color: #26a0da;
}
.full {
	background-color: #da2626;
}

/* status bar and taskbar */
.status-bar {
	display: flex;
	align-items: center;
	justify-content: space-between;
	flex: none;
	height: 23px;
	padding: 0 8px 0 14px;
	color: #1e395b;
}
.view-buttons {
	display: flex;
	gap: 7px;
}
.taskbar {
	display: flex;
	flex: none;
	height: 8px;
	overflow: hidden;
	background-color: #040a10;
}
.task-start {
	width: 48px;
	background-color: #101c24;
}
.task-search {
	width: 344px;
	background-color: #333;
}
.task-app {
	width: 48px;
	margin-left: 51px;
	background-color: #394148;
}
.clock {
	margin-left: auto;
	padding-top: 1px;
	color: #fff;
}
.show-desktop {
	width: 5px;
	margin-left: 87px;
	border-left: 1px solid #7b8288;
}

/* overlays */
.watermark {
	position: absolute;
	right: 38px;
	bottom: 24px;
	color: #fff;
	font-size: 42px;
	line-height: 48px;
	text-shadow: 3px 3px 0 #aaa;
	pointer-events: none;
}
.side-meter {
	position: absolute;
	top: 242px;
	right: 0;
	display: flex;
	flex-direction: column;
	width: 10px;
	height: 59px;
	padding: 7px 2px 6px 3px;
	border-radius: 4px 0 0 4px;
	background-color: #3a3d44;
}
.meter-idle {
	flex: 3;
	background: repeating-linear-gradient(#17191d 0 2px, #4a4e56 2px 3px);
}
.meter-live {
	flex: 2;
	background: repeating-linear-gradient(#56c979 0 2px, #25382c 2px 3px);
}
```
